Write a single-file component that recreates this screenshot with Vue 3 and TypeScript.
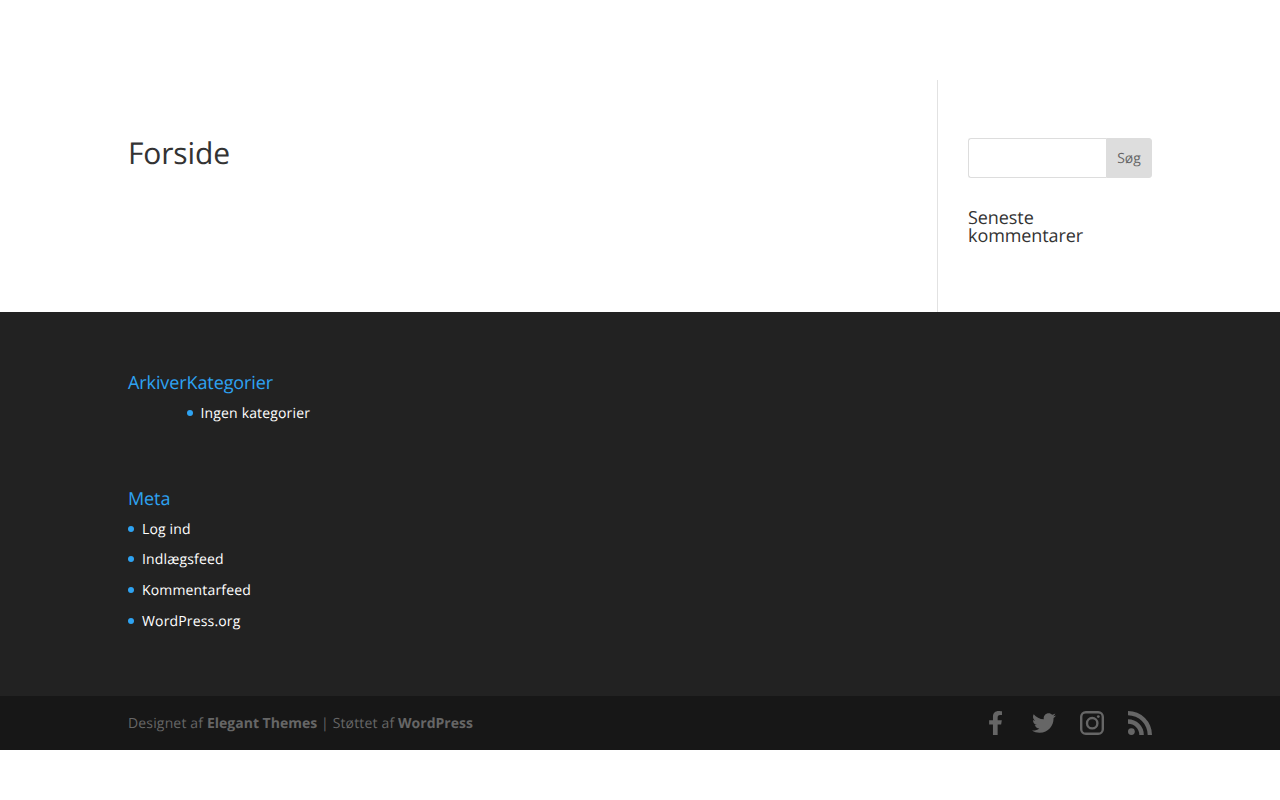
<script setup lang="ts">
const meta: string[] = ['Log ind', 'Indlægsfeed', 'Kommentarfeed', 'WordPress.org']
</script>

<template>
  <div class="page">
    <main class="main">
      <div class="container main-row">
        <div class="content">
          <h1 class="title">Forside</h1>
        </div>
        <aside class="sidebar">
          <form class="search" @submit.prevent>
            <input class="search-input" type="text" />
            <button class="search-btn" type="submit">Søg</button>
          </form>
          <h4 class="side-title">Seneste kommentarer</h4>
        </aside>
      </div>
    </main>
    <footer class="footer">
      <div class="container widgets">
        <div class="widget-row">
          <h4 class="foot-title">Arkiver</h4>
          <div class="cat">
            <h4 class="foot-title">Kategorier</h4>
            <ul class="list nested">
              <li>Ingen kategorier</li>
            </ul>
          </div>
        </div>
        <div class="meta">
          <h4 class="foot-title">Meta</h4>
          <ul class="list">
            <li v-for="m in meta" :key="m">{{ m }}</li>
          </ul>
        </div>
      </div>
      <div class="bottom">
        <div class="container bottom-row">
          <p class="credit">Designet af <strong>Elegant Themes</strong> | Støttet af <strong>WordPress</strong></p>
          <div class="socials">
            <svg class="icon" viewBox="-76 0 448 448" aria-hidden="true">
              <path transform="scale(.875)" d="M279.14 288l14.22-92.66h-88.91v-60.13c0-25.35 12.42-50.06 52.24-50.06h40.42V6.26S260.43 0 225.36 0c-73.22 0-121.08 44.38-121.08 124.72v70.62H22.89V288h81.39v224h100.17V288z" />
            </svg>
            <svg class="icon" viewBox="0 0 512 512" aria-hidden="true">
              <path d="M459.37 151.716c.325 4.548.325 9.097.325 13.645 0 138.72-105.583 298.558-298.558 298.558-59.452 0-114.68-17.219-161.137-47.106 8.447.974 16.568 1.299 25.34 1.299 49.055 0 94.213-16.568 130.274-44.832-46.132-.975-84.792-31.188-98.112-72.772 6.498.974 12.995 1.624 19.818 1.624 9.421 0 18.843-1.3 27.614-3.573-48.081-9.747-84.143-51.98-84.143-102.985v-1.299c13.969 7.797 30.214 12.67 47.431 13.319-28.264-18.843-46.781-51.005-46.781-87.391 0-19.492 5.197-37.36 14.294-52.954 51.655 63.675 129.3 105.258 216.365 109.807-1.624-7.797-2.599-15.918-2.599-24.04 0-57.828 46.782-104.934 104.934-104.934 30.213 0 57.502 12.67 76.67 33.137 23.715-4.548 46.456-13.645 66.599-25.665-7.798 24.366-24.366 44.833-46.132 57.827 21.117-2.273 41.584-8.122 60.426-16.243-14.292 20.791-32.161 39.308-52.628 54.253z" />
            </svg>
            <svg class="icon" viewBox="0 0 24 24" aria-hidden="true">
              <rect class="ring" x="1.2" y="1.2" width="21.6" height="21.6" rx="4.6" />
              <circle class="ring" cx="12.2" cy="12.2" r="5.2" />
              <circle cx="18.3" cy="5.6" r="1.4" />
            </svg>
            <svg class="icon" viewBox="0 0 24 24" aria-hidden="true">
              <circle cx="3.4" cy="20.6" r="3.4" />
              <path d="M0 8.2A15.8 15.8 0 0 1 15.8 24H11.3A11.3 11.3 0 0 0 0 12.7Z" />
              <path d="M0 0A24 24 0 0 1 24 24H19.7A19.7 19.7 0 0 0 0 4.3Z" />
            </svg>
          </div>
        </div>
      </div>
    </footer>
  </div>
</template>

<style>
html, body { margin: 0; background: #fff; }
</style>

<style scoped>
.page { font-family: "Open Sans", sans-serif; font-size: 14px; color: #666; padding-top: 80px; text-rendering: geometricPrecision; }
.container { width: 1024px; margin: 0 auto; }
.main-row { display: flex; height: 232px; }
.content { flex: 0 0 809px; box-sizing: border-box; padding-top: 58px; }
.title { margin: 0; font-size: 30px; font-weight: 400; line-height: 30px; letter-spacing: -.14px; color: #333; }
.sidebar { flex: 0 0 215px; min-width: 0; box-sizing: border-box; border-left: 1px solid #e2e2e2; padding: 58px 0 0 30px; }
.search { display: flex; height: 40px; }
.search-input { flex: 1; min-width: 0; box-sizing: border-box; height: 40px; margin: 0; padding: 0 8px; border: 1px solid #ddd; border-right: 0; border-radius: 3px 0 0 3px; background: #fff; }
.search-btn { flex: 0 0 46px; height: 40px; padding: 0; border: 1px solid #ddd; border-radius: 0 3px 3px 0; background: #ddd; color: #666; font: 14px "Open Sans", sans-serif; text-rendering: geometricPrecision; }
.side-title { margin: 31px 0 0; font-size: 18px; font-weight: 400; line-height: 18px; letter-spacing: -.08px; color: #333; }
.footer { background: #222; }
.widgets { padding: 62px 0 0; height: 384px; box-sizing: border-box; }
.widget-row { display: flex; height: 116px; }
.foot-title { margin: 0; padding-bottom: 9.6px; font-size: 18px; font-weight: 400; line-height: 18px; letter-spacing: -.1px; color: #2ea3f2; }
.list { margin: 0; padding: 0; list-style: none; color: #fff; line-height: 23.8px; letter-spacing: .16px; }
.list li { position: relative; padding-left: 14px; margin-bottom: 6.9px; }
.list li::before { content: ""; position: absolute; left: 0; top: 8px; width: 6px; height: 6px; border-radius: 50%; background: #2ea3f2; }
.bottom { background: #171717; height: 54px; }
.bottom-row { display: flex; justify-content: space-between; align-items: center; height: 54px; }
.credit { margin: 0; color: #666; letter-spacing: .16px; }
.credit strong { letter-spacing: 0; }
.socials { display: flex; gap: 24px; }
.icon { display: block; width: 24px; height: 24px; fill: #666; }
.ring { fill: none; stroke: #666; stroke-width: 2.4px; }
</style>
